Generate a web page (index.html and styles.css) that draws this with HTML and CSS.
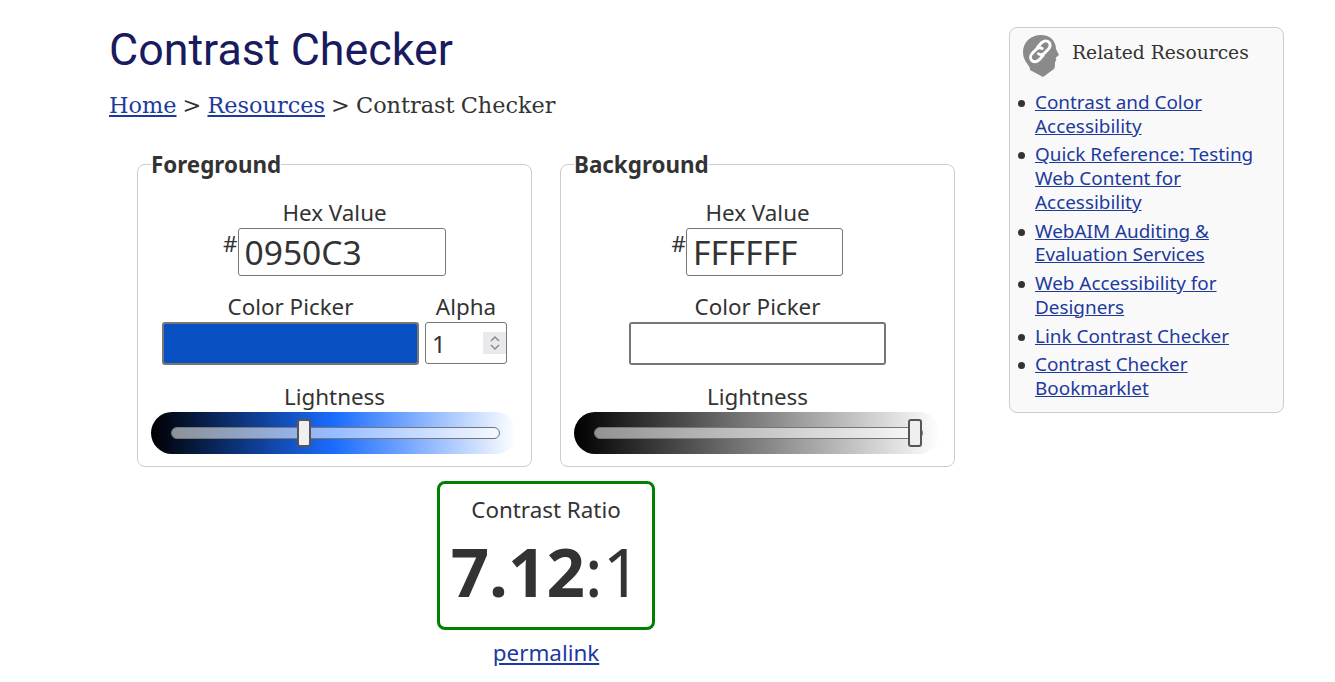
FILE: index.html
```html
<!DOCTYPE html>
<html lang="en">
<head>
    <meta charset="UTF-8">
    <meta name="viewport" content="width=device-width, initial-scale=1.0">
    <title>Contrast Checker</title>
    <link rel="stylesheet" href="styles.css">
</head>
<body>
    <div class="page">
        <main class="main">
            <h1>Contrast Checker</h1>
            <p class="breadcrumbs"><a href="#">Home</a> &gt; <a href="#">Resources</a> &gt; Contrast Checker</p>

            <div class="pickers">
                <fieldset class="picker">
                    <legend>Foreground</legend>
                    <div class="hex-label">Hex Value</div>
                    <div class="hex-row">
                        <span class="hash">#</span>
                        <input class="hex-input hex-fg" type="text" value="0950C3">
                    </div>
                    <div class="color-row">
                        <div class="color-col">
                            <label>Color Picker</label>
                            <input class="color-input color-fg" type="color" value="#0950c3">
                        </div>
                        <div class="alpha-col">
                            <label>Alpha</label>
                            <div class="alpha-wrap">
                                <input class="alpha-input" type="number" value="1" min="0" max="1" step="0.1">
                                <span class="spin">
                                    <svg width="10" height="16" viewBox="0 0 10 16" fill="none" stroke="#8a8a8a" stroke-width="1.500">
                                        <path d="M1 6l4-4 4 4"/>
                                        <path d="M1 10l4 4 4-4"/>
                                    </svg>
                                </span>
                            </div>
                        </div>
                    </div>
                    <div class="light-label">Lightness</div>
                    <div class="slider slider-fg">
                        <input type="range" min="0" max="100" step="0.1" value="40">
                    </div>
                </fieldset>

                <fieldset class="picker">
                    <legend>Background</legend>
                    <div class="hex-label">Hex Value</div>
                    <div class="hex-row">
                        <span class="hash">#</span>
                        <input class="hex-input hex-bg" type="text" value="FFFFFF">
                    </div>
                    <div class="color-row">
                        <div class="color-col">
                            <label>Color Picker</label>
                            <input class="color-input color-bg" type="color" value="#ffffff">
                        </div>
                    </div>
                    <div class="light-label">Lightness</div>
                    <div class="slider slider-bg">
                        <input type="range" min="0" max="100" value="100">
                    </div>
                </fieldset>
            </div>

            <div class="result">
                <div class="ratio-box">
                    <div class="ratio-label">Contrast Ratio</div>
                    <div class="ratio-value"><strong>7.12</strong>:1</div>
                </div>
                <a class="permalink" href="#">permalink</a>
            </div>
        </main>

        <aside class="related">
            <div class="related-head">
                <svg class="related-icon" width="36" height="44" viewBox="0 0 36 44">
                    <path fill="#8a8a8a" d="M18 1C8 1 0 8 0 18c0 6 3 10 5 13 2 2 2 4 2 5l13 7 11-8c1-1 1-4 1-7l1.500-2-1-1.500 1-1.500 2.500-2-3-6C33 7 27 1 18 1z"/>
                    <g fill="none" stroke="#fff" stroke-width="2.800" stroke-linecap="round" transform="translate(-1.500 -2.500) scale(1.060)">
                        <path d="M15 15l4-4.500c2-2 5-2.200 6.800-.5s1.500 4.800-.5 6.800l-3.500 3.500c-1.800 1.700-4 2-5.800.8"/>
                        <path d="M19.500 16c-1.800-1-4-.8-5.800 1l-3.500 3.500c-2 2-2.200 5-.5 6.800s4.800 1.500 6.800-.5l4-4.300"/>
                    </g>
                </svg>
                <h2>Related Resources</h2>
            </div>
            <ul>
                <li><a href="#">Contrast and Color Accessibility</a></li>
                <li><a href="#">Quick Reference: Testing Web Content for Accessibility</a></li>
                <li><a href="#">WebAIM Auditing &amp; Evaluation Services</a></li>
                <li><a href="#">Web Accessibility for Designers</a></li>
                <li><a href="#">Link Contrast Checker</a></li>
                <li><a href="#">Contrast Checker Bookmarklet</a></li>
            </ul>
        </aside>
    </div>
</body>
</html>
```

FILE: styles.css
```css
body {
    font-family: "Noto Sans", "Open Sans", sans-serif;
    font-size: 22.4px;
    line-height: 1.2;
    color: #333;
    background-color: #fff;
    margin: 0;
    padding: 0;
}

a {
    color: #1d3a9e;
}

.page {
    display: flex;
    align-items: flex-start;
    padding-left: 109px;
}

.main {
    width: 900px;
    flex-shrink: 0;
}

h1 {
    font-family: Roboto, sans-serif;
    font-size: 44.8px;
    font-weight: 400;
    line-height: 52px;
    color: #1a1a5e;
    margin: 24px 0 0;
}

.breadcrumbs {
    font-family: "DejaVu Serif", serif;
    font-size: 22.4px;
    word-spacing: -1px;
    line-height: 28px;
    margin: 15px 0 0;
}

.pickers {
    display: flex;
    gap: 28px;
    margin: 31px 0 0 28px;
}

.picker {
    width: 395px;
    height: 317px;
    box-sizing: border-box;
    border: 1px solid #ccc;
    border-radius: 8px;
    padding: 0 13px;
    margin: 0;
    text-align: center;
    min-width: 0;
}

.picker legend {
    font-weight: 700;
    line-height: 26px;
    padding: 2px 0 0;
    text-align: left;
}

.hex-label {
    margin-top: 21px;
    line-height: 27px;
}

.hex-row {
    display: flex;
    justify-content: center;
    align-items: flex-start;
    margin-top: 2px;
}

.hash {
    line-height: 24px;
    margin-top: 4px;
    padding-right: 0.5px;
}

.hex-input {
    box-sizing: border-box;
    height: 48px;
    border: 1px solid #767676;
    border-radius: 3px;
    padding: 0 5.5px;
    font-family: "Noto Sans", sans-serif;
    font-size: 33.6px;
    color: #333;
}

.hex-fg {
    width: 208px;
}

.hex-bg {
    width: 157px;
}

.color-row {
    display: flex;
    justify-content: center;
    gap: 6px;
    margin-top: 17px;
}

.color-col,
.alpha-col {
    display: flex;
    flex-direction: column;
    align-items: center;
}

.color-col label,
.alpha-col label {
    line-height: 28px;
}

.color-input {
    -webkit-appearance: none;
    appearance: none;
    display: block;
    width: 257px;
    height: 43px;
    box-sizing: border-box;
    border: 2px solid #767676;
    border-radius: 3px;
    padding: 0;
    margin: 1px 0 0;
    background: none;
}

.color-input::-webkit-color-swatch-wrapper {
    padding: 0;
}

.color-input::-webkit-color-swatch {
    border: none;
}

.alpha-wrap {
    position: relative;
    margin-top: 1px;
}

.alpha-input {
    display: block;
    box-sizing: border-box;
    width: 82px;
    height: 42px;
    margin: 0;
    border: 1px solid #767676;
    border-radius: 3px;
    padding: 0 0 0 6px;
    font-family: "Noto Sans", sans-serif;
    font-size: 24px;
    color: #333;
}

.alpha-input::-webkit-inner-spin-button {
    -webkit-appearance: none;
}

.spin {
    position: absolute;
    right: 1px;
    top: 10px;
    width: 23px;
    height: 22px;
    background-color: #e9e9ed;
    display: flex;
    align-items: center;
    justify-content: center;
}

.light-label {
    line-height: 31px;
    margin-top: 16px;
}

.slider {
    display: flex;
    align-items: center;
    box-sizing: border-box;
    width: 366px;
    height: 42px;
    border-radius: 21px;
    padding: 0 17px 0 20px;
}

.slider-fg {
    background: linear-gradient(to right, #000, #1a6cff 50%, #fff);
}

.slider-bg {
    background: linear-gradient(to right, #000, #fff);
}

.slider input {
    -webkit-appearance: none;
    appearance: none;
    width: 100%;
    height: 28px;
    margin: 0;
    background: transparent;
}

.slider input::-webkit-slider-runnable-track {
    height: 12px;
    box-sizing: border-box;
    background: rgba(255, 255, 255, 0.55);
    border: 1px solid #767676;
    border-radius: 6px;
}

.slider input::-webkit-slider-thumb {
    -webkit-appearance: none;
    box-sizing: border-box;
    width: 14px;
    height: 28px;
    margin-top: -9px;
    background: #efefef;
    border: 2px solid #555;
    border-radius: 3px;
}

.result {
    display: flex;
    flex-direction: column;
    align-items: center;
    width: 218px;
    margin: 14px 0 0 328px;
}

.ratio-box {
    box-sizing: border-box;
    width: 218px;
    height: 149px;
    border: 3px solid #008000;
    border-radius: 8px;
    text-align: center;
    padding-top: 10px;
}

.ratio-label {
    line-height: 32px;
}

.ratio-value {
    font-size: 67.2px;
    line-height: 80px;
    margin-top: 5px;
    white-space: nowrap;
}

.permalink {
    line-height: 30px;
    margin-top: 8px;
}

.related {
    width: 275px;
    box-sizing: border-box;
    margin-top: 27px;
    border: 1px solid #ccc;
    border-radius: 8px;
    background-color: #f9f9f9;
    padding: 6px 13px 11px;
    font-size: 18.9px;
}

.related-head {
    display: flex;
    align-items: flex-start;
    gap: 13px;
}

.related-icon {
    flex-shrink: 0;
}

.related h2 {
    font-family: "DejaVu Serif", serif;
    font-size: 18.7px;
    font-weight: 400;
    line-height: 24px;
    margin: 7px 0 0;
}

.related ul {
    list-style: none;
    margin: 13px 0 0 -5px;
    padding: 0;
}

.related li {
    display: flex;
    gap: 10px;
    line-height: 23.6px;
    margin-bottom: 5.3px;
}

.related li::before {
    content: "";
    flex-shrink: 0;
    width: 7px;
    height: 7px;
    margin-top: 9px;
    border-radius: 50%;
    background-color: #333;
}

.related li:last-child {
    margin-bottom: 0;
}
```
